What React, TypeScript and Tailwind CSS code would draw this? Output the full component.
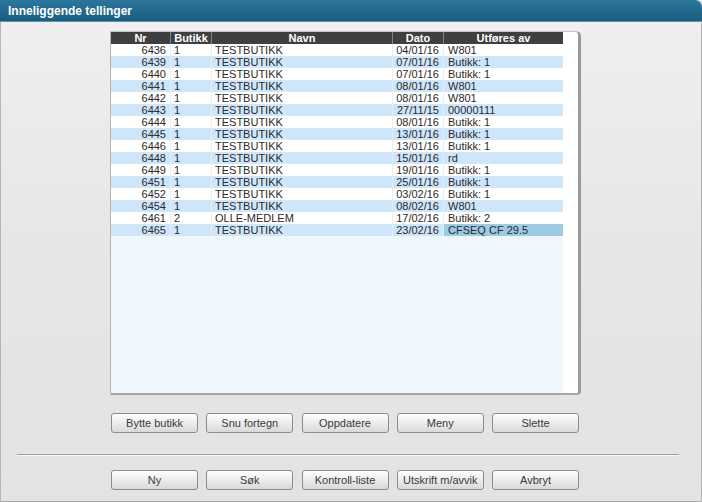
const rows = [
  { nr: "6436", butikk: "1", navn: "TESTBUTIKK", dato: "04/01/16", av: "W801" },
  { nr: "6439", butikk: "1", navn: "TESTBUTIKK", dato: "07/01/16", av: "Butikk: 1" },
  { nr: "6440", butikk: "1", navn: "TESTBUTIKK", dato: "07/01/16", av: "Butikk: 1" },
  { nr: "6441", butikk: "1", navn: "TESTBUTIKK", dato: "08/01/16", av: "W801" },
  { nr: "6442", butikk: "1", navn: "TESTBUTIKK", dato: "08/01/16", av: "W801" },
  { nr: "6443", butikk: "1", navn: "TESTBUTIKK", dato: "27/11/15", av: "00000111" },
  { nr: "6444", butikk: "1", navn: "TESTBUTIKK", dato: "08/01/16", av: "Butikk: 1" },
  { nr: "6445", butikk: "1", navn: "TESTBUTIKK", dato: "13/01/16", av: "Butikk: 1" },
  { nr: "6446", butikk: "1", navn: "TESTBUTIKK", dato: "13/01/16", av: "Butikk: 1" },
  { nr: "6448", butikk: "1", navn: "TESTBUTIKK", dato: "15/01/16", av: "rd" },
  { nr: "6449", butikk: "1", navn: "TESTBUTIKK", dato: "19/01/16", av: "Butikk: 1" },
  { nr: "6451", butikk: "1", navn: "TESTBUTIKK", dato: "25/01/16", av: "Butikk: 1" },
  { nr: "6452", butikk: "1", navn: "TESTBUTIKK", dato: "03/02/16", av: "Butikk: 1" },
  { nr: "6454", butikk: "1", navn: "TESTBUTIKK", dato: "08/02/16", av: "W801" },
  { nr: "6461", butikk: "2", navn: "OLLE-MEDLEM", dato: "17/02/16", av: "Butikk: 2" },
  { nr: "6465", butikk: "1", navn: "TESTBUTIKK", dato: "23/02/16", av: "CFSEQ CF 29.5" },
];

const topButtons = ["Bytte butikk", "Snu fortegn", "Oppdatere", "Meny", "Slette"];
const bottomButtons = ["Ny", "Søk", "Kontroll-liste", "Utskrift m/avvik", "Avbryt"];

function Button({ label }: { label: string }) {
  return (
    <button className="h-[20px] w-[87px] rounded-[3px] border border-[#8c8c8c] bg-gradient-to-b from-[#ffffff] to-[#d9d9d9] text-[11px] leading-none text-[#3a3a3a] shadow-[inset_0_1px_0_#fff]">
      {label}
    </button>
  );
}

export default function App() {
  const selected = rows.length - 1;

  return (
    <div
      className="flex h-[502px] w-[702px] flex-col overflow-hidden bg-[#e5e5e5] text-[11px] text-[#2a2a2a]"
      style={{ fontFamily: '"Liberation Sans", Arial, sans-serif' }}
    >
      {/* Title bar */}
      <div className="flex h-[22px] shrink-0 items-center rounded-tr-[7px] border-b border-[#5b93b0] bg-gradient-to-b from-[#2c769c] to-[#1b5d80] pl-[8px] text-[12px] font-bold text-white">
        Inneliggende tellinger
      </div>

      {/* Body */}
      <div className="flex flex-1 flex-col border-x border-b border-x-[#b5b5b5] border-b-[#a8a8a8] bg-gradient-to-b from-[#efefef] via-[#e6e6e6] to-[#e3e3e3] pb-[10px]">
        {/* List box */}
        <div className="ml-[109px] mt-[9px] flex h-[364px] w-[471px] rounded-tr-[5px] rounded-br-[4px] border-l border-t border-r-[3px] border-b-2 border-l-[#b4b4b4] border-t-[#c4c4c4] border-r-[#9a9a9a] border-b-[#a6a6a6] bg-white">
          <div className="flex w-[452px] flex-col bg-[#eef7fc]">
            <div className="flex h-[12px] shrink-0 bg-[#3f3f3f] text-[11px] font-bold leading-[12px] text-white">
              <div className="w-[60px] border-r border-[#808080] text-center">Nr</div>
              <div className="w-[41px] border-r border-[#808080] text-center">Butikk</div>
              <div className="w-[181px] border-r border-[#808080] text-center">Navn</div>
              <div className="w-[51px] border-r border-[#808080] text-center">Dato</div>
              <div className="flex-1 text-center">Utføres av</div>
            </div>
            {rows.map((r, i) => (
              <div
                key={r.nr}
                className={`flex h-[12px] shrink-0 leading-[12px] ${i % 2 === 1 ? "bg-[#cfe6fa]" : "bg-white"}`}
              >
                <div className="w-[60px] border-r border-[#e4eef6] pr-[4px] text-right">{r.nr}</div>
                <div className="w-[41px] border-r border-[#e4eef6] pl-[3px]">{r.butikk}</div>
                <div className="w-[181px] border-r border-[#e4eef6] pl-[3px]">{r.navn}</div>
                <div className="w-[51px] border-r border-[#e4eef6] pr-[4px] text-right">{r.dato}</div>
                <div className={`flex-1 pl-[4px] ${i === selected ? "bg-[#9ccbe3]" : ""}`}>{r.av}</div>
              </div>
            ))}
          </div>
        </div>

        {/* Action buttons */}
        <div className="ml-[110px] mt-[18px] flex w-[468px] justify-between">
          {topButtons.map((b) => (
            <Button key={b} label={b} />
          ))}
        </div>

        {/* Separator */}
        <div className="ml-[16px] mt-[21px] w-[662px] border-t border-b border-t-[#9e9e9e] border-b-[#f8f8f8]" />

        <div className="ml-[110px] mt-[14px] flex w-[468px] justify-between">
          {bottomButtons.map((b) => (
            <Button key={b} label={b} />
          ))}
        </div>
      </div>
    </div>
  );
}
